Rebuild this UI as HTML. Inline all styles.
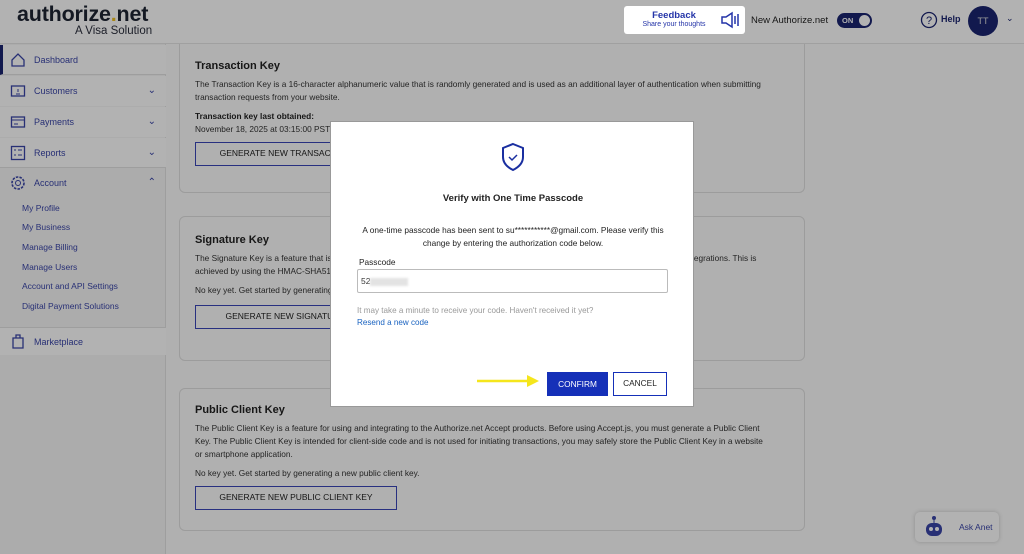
<!DOCTYPE html>
<html><head><style>
*{box-sizing:border-box;margin:0;padding:0}
html,body{width:1024px;height:554px;overflow:hidden;background:#fcfcfc}
body{font-family:"Liberation Sans",sans-serif;position:relative;color:#2b2b2b}
.hdr{position:absolute;left:0;top:0;width:1024px;height:44px;background:#fff;border-bottom:1px solid #e5e5e5}
.logo{position:absolute;left:17px;top:3px;font-size:21.5px;font-weight:bold;color:#1e2433;letter-spacing:-0.2px;line-height:22px}
.logo span{color:#f0c020}
.visa{position:absolute;left:75px;top:25px;font-size:11.5px;color:#2b2f3d;line-height:12px}
.fb{position:absolute;left:624px;top:6px;width:121px;height:28px;background:#fff;border-radius:3px;z-index:20}
.side{position:absolute;left:0;top:44px;width:166px;height:510px;background:#f7f7f7;border-right:1px solid #e3e3e3}
.it{position:absolute;left:0;width:166px;height:30px;font-size:9px;color:#3a45a8;padding-left:34px;line-height:30px}
.it svg{position:absolute;left:10px;top:7px}
.chev{position:absolute;right:10px;top:0;font-size:10px}
.sub{position:absolute;left:22px;font-size:8.5px;color:#3a45a8}
.card{position:absolute;left:179px;width:626px;background:#fcfcfc;border:1px solid #e0e0e0;border-radius:6px;padding:14px 15px}
.card h3{font-size:11px;color:#222;margin-bottom:6px}
.card p{font-size:8.3px;line-height:13px;color:#333;margin-bottom:6px}
.btn{display:inline-block;border:1.5px solid #3a45b8;font-size:8.5px;color:#222;text-align:center;height:24px;line-height:21px}
.ov{position:absolute;left:0;top:0;width:1024px;height:554px;background:rgba(0,0,0,0.3);z-index:10}
.modal{position:absolute;left:330px;top:121px;width:364px;height:286px;background:#fff;border:1px solid #999;z-index:30}
</style></head><body>
<div class="hdr">
<div class="logo">authorize<span>.</span>net</div>
<div class="visa">A Visa Solution</div>
<div style="position:absolute;left:751px;top:15px;font-size:9.5px;color:#222">New Authorize.net</div>
<div style="position:absolute;left:837px;top:13px;width:35px;height:15px;border-radius:8px;background:#1a2470"><span style="position:absolute;left:5px;top:3px;font-size:7.5px;color:#fff;font-weight:bold">ON</span><span style="position:absolute;right:2px;top:2px;width:11px;height:11px;border-radius:50%;background:#fff"></span></div>
<svg style="position:absolute;left:920px;top:11px" width="18" height="18"><circle cx="9" cy="9" r="7.5" fill="none" stroke="#1a2470" stroke-width="1.3"/><text x="9" y="13" font-size="11" text-anchor="middle" fill="#1a2470" font-family="Liberation Sans">?</text></svg>
<div style="position:absolute;left:941px;top:14px;font-size:9px;font-weight:bold;color:#1a2470">Help</div>
<div style="position:absolute;left:968px;top:6px;width:30px;height:30px;border-radius:50%;background:#1a2470;color:#ddd;font-size:9px;text-align:center;line-height:30px">TT</div>
<div style="position:absolute;left:1006px;top:13px;font-size:9px;color:#1a2470">⌄</div>
</div>
<div class="fb"><div style="position:absolute;left:0;width:100px;top:4px;text-align:center;font-size:9.5px;font-weight:bold;color:#2434a8">Feedback</div><div style="position:absolute;left:0;width:100px;top:15px;text-align:center;font-size:7px;color:#2434a8">Share your thoughts</div>
<svg style="position:absolute;left:96px;top:5px" width="20" height="18" viewBox="0 0 20 18"><path d="M2 6h4l6-4v14l-6-4H2z" fill="none" stroke="#2434a8" stroke-width="1.5"/><path d="M15 5v8M18 3v12" stroke="#2434a8" stroke-width="1.5"/></svg></div>
<div class="side">
<div class="it" style="top:1px;background:#fff;border-left:3px solid #1a2470;padding-left:31px;border-bottom:1px solid #e3e3e3"><svg width="16" height="16" style="left:7px"><path d="M2 8L8 2l6 6v6H2z" fill="none" stroke="#3a45a8" stroke-width="1.3"/></svg>Dashboard</div>
<div class="it" style="top:32px;background:#fff"><svg width="16" height="16"><rect x="1.5" y="3" width="13" height="10" fill="none" stroke="#3a45a8" stroke-width="1.3"/><path d="M6 11h4M8 6v3" stroke="#3a45a8"/></svg>Customers<span class="chev">⌄</span></div>
<div class="it" style="top:63px;background:#fff"><svg width="16" height="16"><rect x="1.5" y="3" width="13" height="10" fill="none" stroke="#3a45a8" stroke-width="1.3"/><path d="M1.5 6h13M4 10h4" stroke="#3a45a8"/></svg>Payments<span class="chev">⌄</span></div>
<div class="it" style="top:94px;background:#fff;border-bottom:1px solid #e3e3e3"><svg width="16" height="16"><rect x="1.5" y="1.5" width="13" height="13" fill="none" stroke="#3a45a8" stroke-width="1.3"/><path d="M4 5h2M8 5h4M4 10h2M8 10h4" stroke="#3a45a8"/></svg>Reports<span class="chev">⌄</span></div>
<div class="it" style="top:124px"><svg width="16" height="16"><circle cx="8" cy="8" r="6" fill="none" stroke="#3a45a8" stroke-width="1.6" stroke-dasharray="2.5 1.2"/><circle cx="8" cy="8" r="2.5" fill="none" stroke="#3a45a8"/></svg>Account<span class="chev">⌃</span></div>
<div class="sub" style="top:159px">My Profile</div>
<div class="sub" style="top:178px">My Business</div>
<div class="sub" style="top:198px">Manage Billing</div>
<div class="sub" style="top:218px">Manage Users</div>
<div class="sub" style="top:237px">Account and API Settings</div>
<div class="sub" style="top:257px">Digital Payment Solutions</div>
<div class="it" style="top:283px;height:28px;line-height:28px;background:#fff;border-top:1px solid #e3e3e3"><svg width="16" height="16" style="top:5px"><path d="M3 5h10v10H3zM6 5V2h4v3" fill="none" stroke="#3a45a8" stroke-width="1.3"/></svg>Marketplace</div>
</div>
<div class="card" style="top:44px;height:149px;border-top:none;border-radius:0 0 6px 6px;padding-top:16px">
<h3>Transaction Key</h3>
<p>The Transaction Key is a 16-character alphanumeric value that is randomly generated and is used as an additional layer of authentication when submitting transaction requests from your website.</p>
<p style="margin:0;font-weight:bold;color:#222">Transaction key last obtained:</p>
<p>November 18, 2025 at 03:15:00 PST</p>
<div class="btn" style="width:200px">GENERATE NEW TRANSACTION KEY</div>
</div>
<div class="card" style="top:216px;height:145px;padding-top:17px">
<h3>Signature Key</h3>
<p>The Signature Key is a feature that is used to verify the authenticity of notifications sent through the Webhooks (and Silent Post URL) integrations. This is achieved by using the HMAC-SHA512 hash. You must have a valid Signature Key before you can receive Webhooks notifications.</p>
<p>No key yet. Get started by generating a new signature key.</p>
<div class="btn" style="width:200px;margin-top:2px">GENERATE NEW SIGNATURE KEY</div>
</div>
<div class="card" style="top:388px;height:143px;padding-top:15px">
<h3>Public Client Key</h3>
<p style="width:570px">The Public Client Key is a feature for using and integrating to the Authorize.net Accept products. Before using Accept.js, you must generate a Public Client Key. The Public Client Key is intended for client-side code and is not used for initiating transactions, you may safely store the Public Client Key in a website or smartphone application.</p>
<p>No key yet. Get started by generating a new public client key.</p>
<div class="btn" style="width:202px">GENERATE NEW PUBLIC CLIENT KEY</div>
</div>
<div style="position:absolute;left:915px;top:512px;width:84px;height:30px;background:#fff;border-radius:5px;box-shadow:0 0 4px #ccc">
<svg style="position:absolute;left:8px;top:3px" width="22" height="24"><circle cx="11" cy="3" r="2" fill="#3a45a8"/><path d="M11 5v3" stroke="#3a45a8"/><rect x="3" y="8" width="16" height="13" rx="6" fill="#3a45a8"/><circle cx="8" cy="14" r="2" fill="#fff"/><circle cx="14" cy="14" r="2" fill="#fff"/></svg>
<span style="position:absolute;left:44px;top:10px;font-size:8.5px;color:#3a45a8">Ask Anet</span></div>
<div class="ov"></div>
<div class="modal">
<svg style="position:absolute;left:169px;top:20px" width="26" height="30" viewBox="0 0 26 30"><path d="M13 2l10 4v9c0 6-4 10-10 13C7 25 3 21 3 15V6z" fill="none" stroke="#1a2fa0" stroke-width="2"/><path d="M9 15l3 3 5-5" fill="none" stroke="#1a2fa0" stroke-width="1.5"/></svg>
<div style="position:absolute;left:0;width:364px;top:71px;text-align:center;font-size:9.5px;font-weight:bold;color:#222">Verify with One Time Passcode</div>
<div style="position:absolute;left:20px;width:324px;top:102px;text-align:center;font-size:8.3px;line-height:13px;color:#222">A one-time passcode has been sent to su***********@gmail.com. Please verify this change by entering the authorization code below.</div>
<div style="position:absolute;left:28px;top:135px;font-size:8.3px;color:#222">Passcode</div>
<div style="position:absolute;left:26px;top:147px;width:311px;height:24px;border:1px solid #bbb;border-radius:2px;font-size:8.5px;padding:6px 3px;color:#333">52<span style="display:inline-block;width:38px;height:8px;background:#e3e3e3;vertical-align:middle;filter:blur(1px)"></span></div>
<div style="position:absolute;left:26px;top:184px;font-size:8.1px;color:#999">It may take a minute to receive your code. Haven't received it yet?</div>
<div style="position:absolute;left:26px;top:196px;font-size:8.1px;color:#1a63c0">Resend a new code</div>
<svg style="position:absolute;left:144px;top:252px" width="66" height="14"><path d="M2 7h54" stroke="#f5e61c" stroke-width="2.5"/><path d="M52 1l12 6-12 6z" fill="#f5e61c"/></svg>
<div style="position:absolute;left:216px;top:250px;width:61px;height:24px;background:#1530b8;color:#fff;font-size:8.3px;text-align:center;line-height:24px">CONFIRM</div>
<div style="position:absolute;left:282px;top:250px;width:54px;height:24px;border:1.5px solid #1530b8;color:#222;font-size:8.3px;text-align:center;line-height:21px">CANCEL</div>
</div>
</body></html>
